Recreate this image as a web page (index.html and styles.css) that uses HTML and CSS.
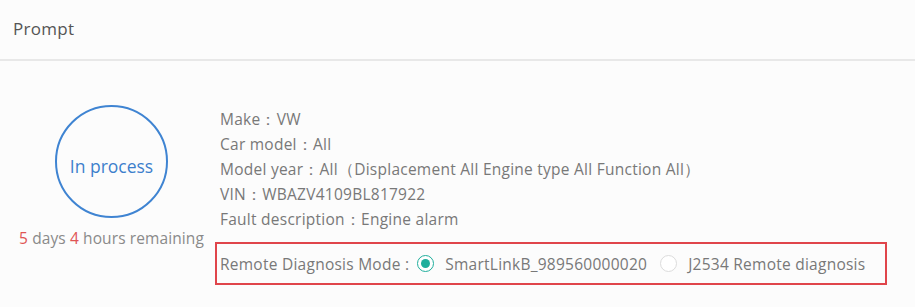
FILE: index.html
```html
<!DOCTYPE html>
<html>
<head>
<meta charset="utf-8">
<link rel="stylesheet" href="styles.css">
</head>
<body>
<div class="panel">
  <div class="header">Prompt</div>
  <div class="content">
    <div class="status">
      <div class="circle">In process</div>
      <div class="remaining"><span class="num">5</span> days <span class="num">4</span> hours remaining</div>
    </div>
    <div class="info">
      <div class="line">Make：VW</div>
      <div class="line">Car model：All</div>
      <div class="line">Model year：All（Displacement All Engine type All Function All）</div>
      <div class="line">VIN：WBAZV4109BL817922</div>
      <div class="line">Fault description：Engine alarm</div>
      <div class="mode">
        <span class="mode-label">Remote Diagnosis Mode :</span>
        <span class="radio checked"></span>
        <span class="opt">SmartLinkB_989560000020</span>
        <span class="radio"></span>
        <span class="opt">J2534 Remote diagnosis</span>
      </div>
    </div>
  </div>
</div>
</body>
</html>
```
FILE: styles.css
```css
html, body {
  margin: 0;
  padding: 0;
  background: #ffffff;
}
body {
  font-family: "Open Sans", "Noto Sans", sans-serif;
  color: #787878;
}
.panel {
  width: 915px;
  height: 307px;
  background: #fcfcfc;
}
.header {
  height: 61px;
  box-sizing: border-box;
  padding: 0 13px 2px;
  display: flex;
  align-items: center;
  font-size: 17px;
  letter-spacing: 0.3px;
  color: #555555;
  border-bottom: 2px solid #e8e8e8;
}
.content {
  display: flex;
  padding-top: 44px;
}
.status {
  width: 201px;
  margin-left: 11px;
  display: flex;
  flex-direction: column;
  align-items: center;
}
.circle {
  width: 113px;
  height: 113px;
  box-sizing: border-box;
  border: 2px solid #3f84d2;
  border-radius: 50%;
  display: flex;
  align-items: center;
  justify-content: center;
  color: #3d7fcc;
  font-size: 17.5px;
  padding-top: 8px;
}
.remaining {
  margin-top: 9px;
  font-size: 15.5px;
  letter-spacing: 0.1px;
  color: #8a8a8a;
  white-space: nowrap;
}
.num {
  color: #e05555;
}
.info {
  margin-left: 8px;
  padding-top: 1.5px;
  font-size: 15.5px;
  letter-spacing: 0.25px;
}
.line {
  height: 25px;
  line-height: 25px;
  white-space: nowrap;
  color: #787878;
}
.mode {
  margin-top: 10.5px;
  margin-left: -5px;
  width: 672px;
  height: 43px;
  box-sizing: border-box;
  border: 2px solid #e0454b;
  display: flex;
  align-items: center;
  padding-left: 3px;
  white-space: nowrap;
  color: #787878;
}
.mode-label {
  margin-right: 8px;
}
.radio {
  width: 17px;
  height: 17px;
  box-sizing: border-box;
  border: 1px solid #dcdcdc;
  border-radius: 50%;
  background: #ffffff;
  margin-right: 11px;
  display: flex;
  align-items: center;
  justify-content: center;
}
.radio.checked {
  border: 1.5px solid #1fae9c;
}
.radio.checked::after {
  content: "";
  width: 9px;
  height: 9px;
  border-radius: 50%;
  background: #1fae9c;
}
.opt {
  margin-right: 13px;
}
```
